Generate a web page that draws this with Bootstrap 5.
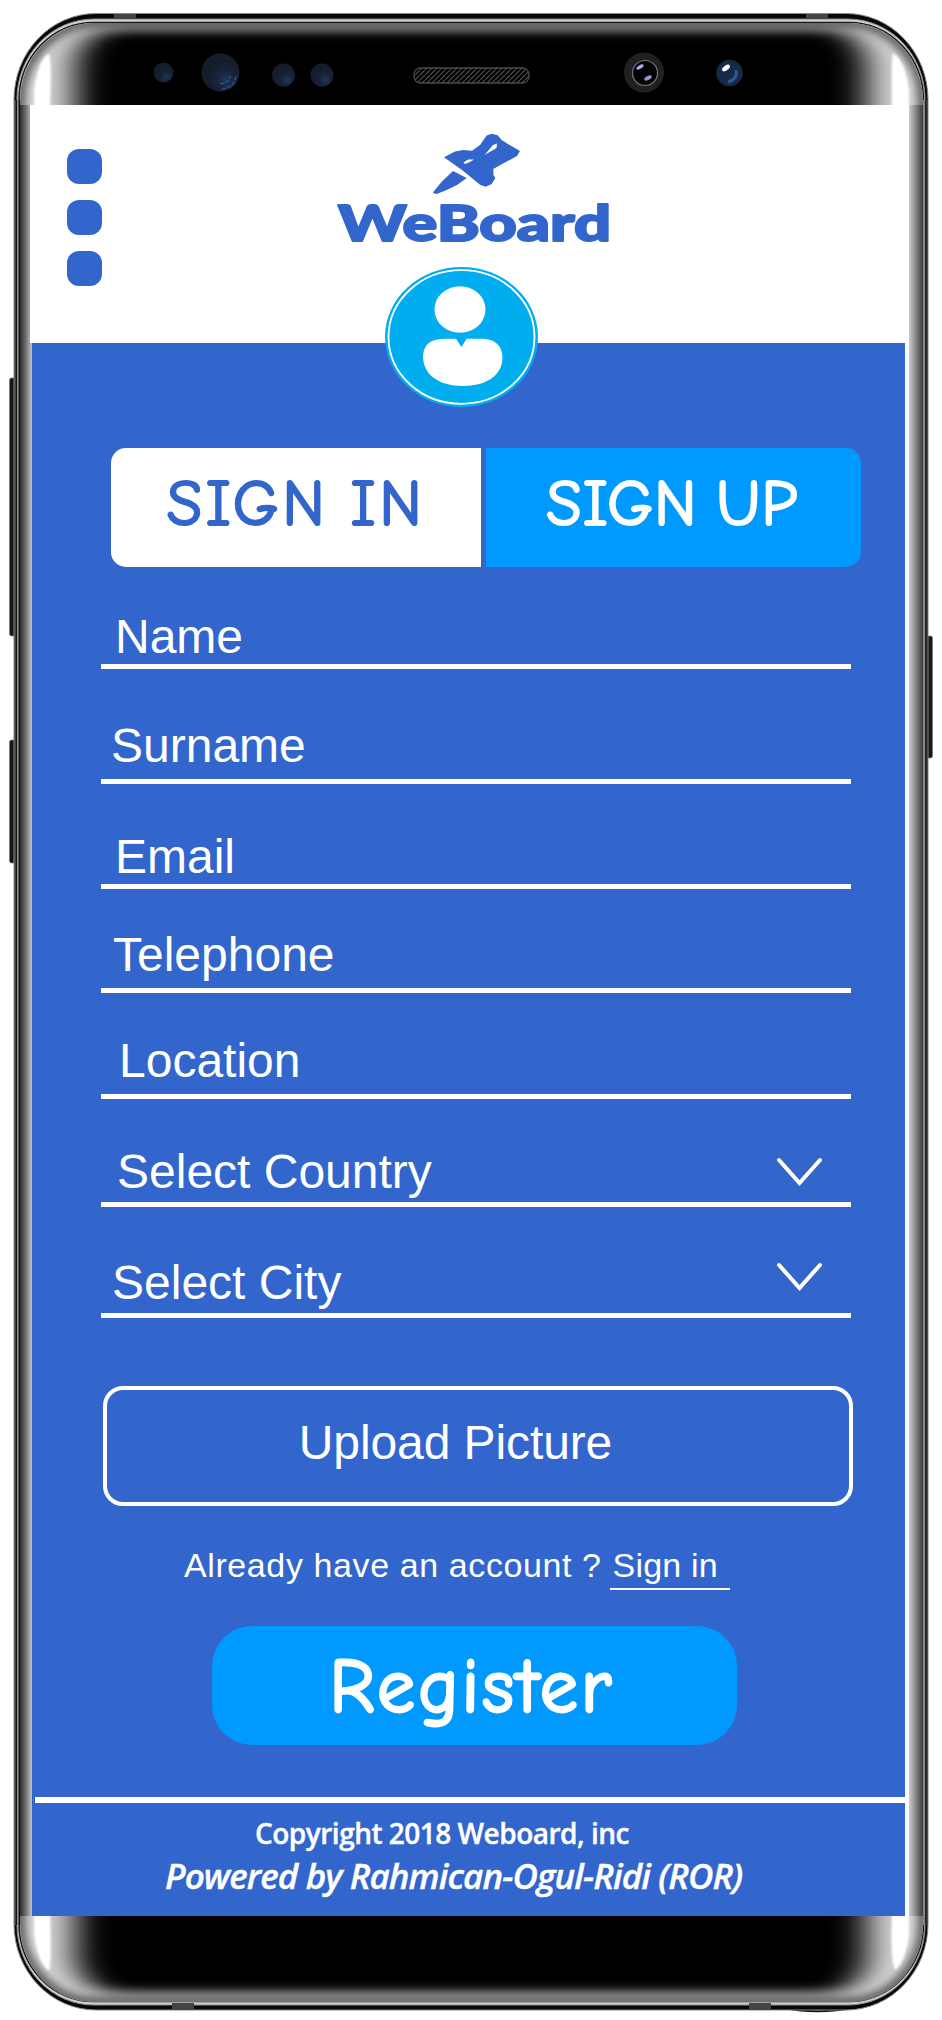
<!DOCTYPE html>
<html lang="en">
<head>
<meta charset="utf-8">
<meta name="viewport" content="width=device-width, initial-scale=1">
<title>WeBoard – Sign up</title>
<link href="https://cdn.jsdelivr.net/npm/bootstrap@5.3.0/dist/css/bootstrap.min.css" rel="stylesheet">
<style>
  :root { --wb-blue: #3366cc; --wb-sky: #0099ff; --wb-cyan: #00aeef; }
  body { background: #fff; font-family: "Liberation Sans", Arial, sans-serif; }
  .device { width: 942px; height: 2020px; overflow: hidden; }
  .device-art { z-index: 0; }
  .screen { z-index: 1; margin: 105px 33px 0 30px; height: 1811px; }
  .topbar { height: 238px; padding: 29px 0 0 37px; background: #fff; }
  .menu-dots { width: 35px; gap: 16.2px; padding-top: 15px; }
  .menu-dots i { display: block; width: 35px; height: 35px; border-radius: 12px; background: var(--wb-blue); }
  .logo { margin-left: 224px; overflow: visible; }
  .avatar { left: 354px; top: 161px; z-index: 2; }
  .panel { background: var(--wb-blue); margin-left: 2px; border-right: 4px solid #fff; height: 1573px; padding-top: 105px; }
  .tabs { margin-left: 79px; width: 750px; height: 119px; gap: 5px; }
  .tab-btn { font-family: "Comic Sans MS", "Comic Neue", Inter, sans-serif; font-size: 64px; line-height: 1; border: 0; padding: 0 0 7px; border-radius: 0; white-space: nowrap; -webkit-text-stroke: 2.2px currentColor; }
  .tab-btn.in { background: #fff; color: var(--wb-blue); border-radius: 15px 0 0 15px; width: 370px; letter-spacing: 3.8px; word-spacing: -3px; }
  .tab-btn.up { background: var(--wb-sky); color: #fff; border-radius: 0 15px 15px 0; width: 375px; letter-spacing: 1.2px; word-spacing: -4px; padding-right: 2px; }
  .field { margin-left: 69px; width: 750px; border-bottom: 5px solid #fff; color: #fff; font-size: 48px; line-height: 48px; }
  .field span { display: block; }
  .f1 { height: 102px; padding: 46px 0 0 14px; }
  .f2 { height: 115px; padding: 53px 0 0 10px; }
  .f3 { height: 105px; padding: 49px 0 0 14px; }
  .f4 { height: 104px; padding: 42px 0 0 12px; }
  .f5 { height: 106px; padding: 44px 0 0 18px; }
  .f6 { height: 108px; padding: 49px 29px 0 16px; }
  .f7 { height: 111px; padding: 52px 29px 0 11px; }
  .f6 svg { margin-top: 9px; } .f7 svg { margin-top: 3px; }
  .upload { margin: 68px 0 0 71px; width: 750px; height: 120px; border: 4px solid #fff; border-radius: 20px; background: none; color: #fff; font-size: 48px; line-height: 48px; letter-spacing: -.1px; padding: 0 45px 6px 0; }
  .already { margin: 39px 0 0 152px; font-size: 34px; line-height: 40px; color: #fff; letter-spacing: .6px; }
  .already a { color: #fff; border-bottom: 2px solid #fff; padding: 0 12px 0 3px; height: 45px; letter-spacing: .2px; }
  .register { margin: 36px 0 0 180px; width: 525px; height: 119px; border: 0; border-radius: 40px; background: var(--wb-sky); color: #fff; font-family: "Comic Sans MS", "Comic Neue", Inter, sans-serif; font-size: 76px; line-height: 1; letter-spacing: 3.2px; padding: 4px 5px 0 0; -webkit-text-stroke: 2.8px currentColor; }
  .foot { margin: 52px 0 0 3px; border-top: 6px solid #fff; color: #fff; font-family: "Myriad Pro", "Open Sans", "Noto Sans", sans-serif; font-weight: 600; -webkit-text-stroke: .4px currentColor; }
  .copy { margin: 11px 0 0 220px; font-size: 28px; line-height: 38px; letter-spacing: -.5px; white-space: nowrap; }
  .power { margin: 2px 0 0 130px; font-size: 35px; line-height: 44px; font-style: italic; letter-spacing: -.9px; white-space: nowrap; }
</style>
</head>
<body>
<div class="device position-relative">
  <svg class="device-art position-absolute top-0 start-0" width="942" height="2020" viewBox="0 0 942 2020" aria-hidden="true">
    <defs>
      <clipPath id="body"><rect x="20" y="23" width="903" height="1979" rx="74" ry="78"/></clipPath>
      <filter id="soft" x="-10%" y="-5%" width="120%" height="110%"><feGaussianBlur stdDeviation="17 6"/></filter>
      <filter id="edge" x="-10%" y="-5%" width="120%" height="110%"><feGaussianBlur stdDeviation="5"/></filter>
      <filter id="glint"><feGaussianBlur stdDeviation="1"/></filter>
      <linearGradient id="sideL"><stop offset="0" stop-color="#2c2c2c"/><stop offset=".45" stop-color="#6b6b6b"/><stop offset="1" stop-color="#c4c4c4"/></linearGradient>
      <linearGradient id="sideR"><stop offset="0" stop-color="#c9cdd2"/><stop offset=".5" stop-color="#858585"/><stop offset="1" stop-color="#3a3a3a"/></linearGradient>
      <pattern id="mesh" width="5" height="5" patternUnits="userSpaceOnUse"><path d="M0 5L5 0" stroke="#555" stroke-width="1.1"/></pattern>
      <radialGradient id="lens" cx=".65" cy=".7"><stop offset="0" stop-color="#1c3a5a"/><stop offset=".5" stop-color="#19233a"/><stop offset="1" stop-color="#151c2c"/></radialGradient>
    </defs>
    <g fill="#161616" stroke="#777" stroke-width=".7">
      <rect x="9.500" y="378" width="9" height="258" rx="2"/>
      <rect x="9.500" y="740" width="9" height="123" rx="2"/>
      <rect x="922" y="636" width="10.500" height="122" rx="2"/>
    </g>
    <path d="M785 2008q33 7 72-1" fill="none" stroke="#111" stroke-width="2"/>
    <rect x="14" y="13.500" width="914" height="1996.500" rx="82" ry="86" fill="#080808" stroke="#888"/>
    <rect x="17" y="19" width="908" height="1986" rx="77" ry="80" fill="#cfcfcf" stroke="#8a8a8a" stroke-width="1"/>
    <rect x="19" y="22.500" width="904.500" height="1979" rx="74" ry="78" fill="#bdbdbd" stroke="#191919" stroke-width="1.500"/>
    <g clip-path="url(#body)">
      <rect x="20" y="23" width="903" height="1979" fill="#d6d6d6"/>
      <rect x="75" y="29" width="792" height="1964" rx="40" filter="url(#soft)"/>
      <rect x="20" y="23" width="903" height="1979" rx="74" ry="78" fill="none" stroke="#444" stroke-width="9" filter="url(#edge)"/>
      <g fill="#fff" filter="url(#glint)">
        <path d="M34 110V90Q38 60 49 53Q52 60 50 110Z"/><path d="M909 110V90Q905 60 893 53Q891 60 892 110Z"/>
        <path d="M34 1912V1935Q38 1963 49 1971Q52 1964 50 1912Z"/><path d="M909 1912V1935Q905 1963 895 1970Q890 1960 892 1912Z"/>
      </g>
    </g>
    <rect x="20" y="105" width="12" height="1811" fill="url(#sideL)"/>
    <rect x="909" y="105" width="14" height="1811" fill="url(#sideR)"/>
    <g stroke-width="1" fill="none">
      <path d="M15 100V1925M18 100V1925" stroke="#777"/><path d="M16.500 100V1925M19.500 100V1925" stroke="#111"/>
      <path d="M927 100V1925" stroke="#555"/><path d="M925.500 100V1925" stroke="#222"/><path d="M923.500 100V1925" stroke="#888"/>
    </g>
    <g fill="#444"><path d="M114 14h22v5h-22zM806 14h22v5h-22zM172 2003h22v7h-22zM749 2003h22v7h-22z"/></g>
    <g fill="url(#lens)"><circle cx="163.500" cy="72.500" r="10"/><circle cx="220.500" cy="72.500" r="19"/><circle cx="283.500" cy="75" r="11.500"/><circle cx="322" cy="75" r="11.500"/></g>
    <path d="M222 89q13-2 14-13M220 84q9-1 10-8" stroke="#2b5a7c" stroke-width="1.300" fill="none" stroke-dasharray="4 1.500"/>
    <rect x="414" y="68" width="115" height="15" rx="6.500" fill="url(#mesh)" stroke="#4a4a4a" stroke-width="1.300"/>
    <circle cx="644" cy="72.500" r="20" fill="#202022"/><circle cx="645" cy="73" r="12.500" fill="#020203" stroke="#777" stroke-width="1.200"/>
    <ellipse cx="640" cy="67" rx="4" ry="1.800" fill="#b9a2e8" transform="rotate(-30 640 67)"/><ellipse cx="648" cy="78" rx="4" ry="2" fill="#a78bd8" transform="rotate(-25 648 78)"/>
    <circle cx="729.500" cy="73" r="13" fill="#152a48" stroke="#222" stroke-width="1"/>
    <path d="M728 82q10-3 8-12" stroke="#2b5a90" stroke-width="3" fill="none"/><ellipse cx="726" cy="68" rx="4.500" ry="2.300" fill="#fff" transform="rotate(-35 726 68)"/>
  </svg>

  <main class="screen position-relative">
    <header class="topbar d-flex align-items-start">
      <div class="menu-dots d-flex flex-column" role="button" aria-label="Menu"><i></i><i></i><i></i></div>
      <svg class="logo" width="296" height="116" viewBox="326 134 296 116" role="img" aria-label="WeBoard">
        <g fill="#3366cc">
          <path d="M444 157.300L455 151.500L463 150L472 150.700L480 145L486.700 135.500L491.700 133.700L497.700 135.300L501.700 140L508 144L520 151L517 156L501.700 164.300L493.300 169L493.500 175L495.300 178L491.700 184L485.700 186.700L480 184.700L462 170Z"/>
          <path d="M453 171L466.700 178L457 185L446.700 190L436.700 194L433 193L434 191L441.700 181.700Z"/>
          <path d="M463.500 162.500L468 159.500L474 159.500L470 162L465 164ZM484.500 155L493 145L497 143.500L496.500 148Z" fill="#fff"/>
          <text x="338" y="240.500" font-family="Lato, Inter, sans-serif" font-weight="900" font-size="50" textLength="273" lengthAdjust="spacingAndGlyphs" stroke="#3366cc" stroke-width="2" stroke-linejoin="round">WeBoard</text>
        </g>
      </svg>
    </header>
    <svg class="avatar position-absolute" width="156" height="142" viewBox="384 266 156 142" role="img" aria-label="Profile picture">
      <ellipse cx="461.500" cy="337" rx="76.500" ry="70" fill="#00aeef"/>
      <ellipse cx="461.500" cy="337" rx="73" ry="66.800" fill="none" stroke="#fff" stroke-width="1.800"/>
      <ellipse cx="460" cy="309.500" rx="25.500" ry="23.300" fill="#fff"/>
      <path d="M456 338.700L461.500 347L466.500 338.700H480C496 338.700 502.500 346 502.500 358C502 375 487 386 463 386C438 386 423 374 423 356C424 343 432 338.700 445 338.700Z" fill="#fff"/>
    </svg>

    <section class="panel">
      <div class="tabs d-flex" role="group">
        <button class="tab-btn in" type="button">SIGN IN</button>
        <button class="tab-btn up" type="button">SIGN UP</button>
      </div>
      <form>
        <div class="field f1"><span>Name</span></div>
        <div class="field f2"><span>Surname</span></div>
        <div class="field f3"><span>Email</span></div>
        <div class="field f4"><span>Telephone</span></div>
        <div class="field f5"><span>Location</span></div>
        <div class="field f6 d-flex justify-content-between align-items-start"><span>Select Country</span>
          <svg width="45" height="30" viewBox="0 0 45 30"><path d="M2 3L22.500 26L43 3" fill="none" stroke="#fff" stroke-width="4" stroke-linecap="round"/></svg></div>
        <div class="field f7 d-flex justify-content-between align-items-start"><span>Select City</span>
          <svg width="45" height="30" viewBox="0 0 45 30"><path d="M2 3L22.500 26L43 3" fill="none" stroke="#fff" stroke-width="4" stroke-linecap="round"/></svg></div>
        <button class="upload d-block text-center" type="button">Upload Picture</button>
        <p class="already d-flex mb-0"><span class="me-2">Already have an account ?</span><a class="text-decoration-none" href="#">Sign in</a></p>
        <button class="register d-block" type="button">Register</button>
      </form>
      <footer class="foot">
        <p class="copy mb-0">Copyright 2018 Weboard, inc</p>
        <p class="power mb-0">Powered by Rahmican-Ogul-Ridi (ROR)</p>
      </footer>
    </section>
  </main>
</div>
<script src="https://cdn.jsdelivr.net/npm/bootstrap@5.3.0/dist/js/bootstrap.bundle.min.js"></script>
</body>
</html>
